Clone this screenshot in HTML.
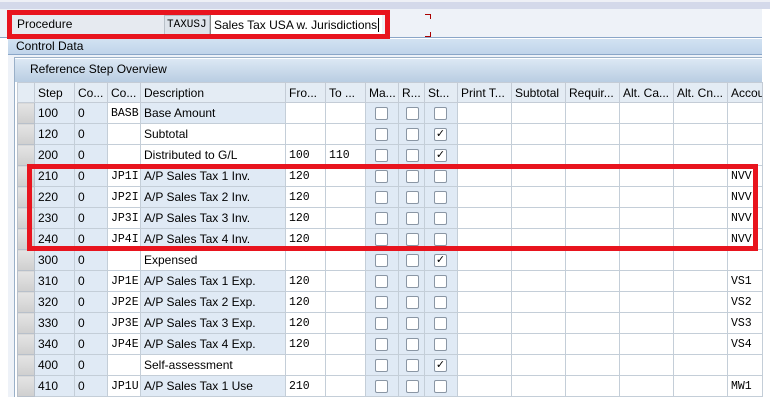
<!DOCTYPE html>
<html><head><meta charset="utf-8"><style>
*{margin:0;padding:0;box-sizing:border-box}
body{width:770px;height:403px;overflow:hidden;background:#fff;font-family:"Liberation Sans",Tahoma,sans-serif;font-size:12px;color:#000;position:relative}
.abs{position:absolute}
table{border-collapse:collapse;table-layout:fixed;position:absolute;left:17px;top:82px;width:745px}
td{height:21px;border:1px solid #c4ced8;padding:0 0 0 3px;white-space:nowrap;overflow:hidden;background:#fff;font-size:12px}
tr.h td{background:#e4ecf4;border-color:#c4ccd6;height:20px}
td.sel{background:linear-gradient(#e4e4e4,#cfcfcf);border-color:#b8c0ca}
td.b{background:#e0eaf5}
.m{font-family:"Liberation Mono",monospace;font-size:11.5px}
.cb{display:inline-block;width:13px;height:13px;border:1px solid #8a96a4;border-radius:2px;background:#fff;margin-left:6px;vertical-align:middle;text-align:center;line-height:11px;font-size:11px}
</style></head><body>
<div class="abs" style="left:0;top:0;width:770px;height:9px;background:#d4d9ea;border-top:2px solid #eef0f6"></div>
<div class="abs" style="left:0;top:9px;width:762px;height:29px;background:#eef2f8;border-bottom:1px solid #8aa6c8"></div>
<div class="abs" style="left:12px;top:15px;width:152px;height:21px;background:#e6eaf0;border-bottom:1px solid #b0b8c0;padding:2px 5px;font-size:12px">Procedure</div>
<div class="abs m" style="left:164px;top:15px;width:46px;height:21px;background:#dde3ea;border:1px solid #b8c0c8;padding:3px 2px;font-size:11px">TAXUSJ</div>
<div class="abs" style="left:210px;top:15px;width:172px;height:21px;background:#fff;border-left:1px solid #888;padding:3px 3px">Sales Tax USA w. Jurisdictions<span style="border-left:1px solid #000;margin-left:1px"></span></div>
<div class="abs" style="left:7px;top:10px;width:383px;height:29px;border:5px solid #e8141e"></div>
<div class="abs" style="left:425px;top:14px;width:6px;height:5px;border-top:1px solid #a00;border-right:1px solid #a00"></div>
<div class="abs" style="left:425px;top:32px;width:6px;height:5px;border-bottom:1px solid #a00;border-right:1px solid #a00"></div>
<div class="abs" style="left:8px;top:39px;width:754px;height:16px;background:linear-gradient(#d2e2f2,#c0d4ea);border-bottom:1px solid #8aa6c8;padding:0 8px;line-height:15px">Control Data</div>
<div class="abs" style="left:8px;top:55px;width:754px;height:348px;background:#eef2f8"></div>
<div class="abs" style="left:14px;top:57px;width:748px;height:340px;border-left:1px solid #9ab0c8;border-top:1px solid #9ab0c8;background:#fff"></div>
<div class="abs" style="left:15px;top:59px;width:747px;height:23px;background:linear-gradient(#dce8f4,#b9cde2);padding:3px 15px">Reference Step Overview</div>
<table>
<colgroup><col style="width:17px"><col style="width:40px"><col style="width:33px"><col style="width:33px"><col style="width:145px"><col style="width:40px"><col style="width:40px"><col style="width:33px"><col style="width:26px"><col style="width:33px"><col style="width:54px"><col style="width:54px"><col style="width:54px"><col style="width:54px"><col style="width:54px"><col style="width:35px"></colgroup>
<tr class="h"><td class="sel"></td><td>Step</td><td>Co...</td><td>Co...</td><td>Description</td><td>Fro...</td><td>To ...</td><td>Ma...</td><td>R...</td><td>St...</td><td>Print T...</td><td>Subtotal</td><td>Requir...</td><td>Alt. Ca...</td><td>Alt. Cn...</td><td>Accou</td></tr>
<tr><td class="sel"></td><td class="b">100</td><td class="b">0</td><td class="m">BASB</td><td class="b">Base Amount</td><td></td><td></td><td class="b"><span class="cb"></span></td><td class="b"><span class="cb" style="margin-left:4px"></span></td><td class="b"><span class="cb"></span></td><td></td><td></td><td></td><td></td><td></td><td></td></tr>
<tr><td class="sel"></td><td class="b">120</td><td class="b">0</td><td></td><td>Subtotal</td><td></td><td></td><td class="b"><span class="cb"></span></td><td class="b"><span class="cb" style="margin-left:4px"></span></td><td class="b"><span class="cb">✓</span></td><td></td><td></td><td></td><td></td><td></td><td></td></tr>
<tr><td class="sel"></td><td class="b">200</td><td class="b">0</td><td></td><td>Distributed to G/L</td><td class="m">100</td><td class="m">110</td><td class="b"><span class="cb"></span></td><td class="b"><span class="cb" style="margin-left:4px"></span></td><td class="b"><span class="cb">✓</span></td><td></td><td></td><td></td><td></td><td></td><td></td></tr>
<tr><td class="sel"></td><td class="b">210</td><td class="b">0</td><td class="m">JP1I</td><td class="b">A/P Sales Tax 1 Inv.</td><td class="m">120</td><td></td><td class="b"><span class="cb"></span></td><td class="b"><span class="cb" style="margin-left:4px"></span></td><td class="b"><span class="cb"></span></td><td></td><td></td><td></td><td></td><td></td><td class="m">NVV</td></tr>
<tr><td class="sel"></td><td class="b">220</td><td class="b">0</td><td class="m">JP2I</td><td class="b">A/P Sales Tax 2 Inv.</td><td class="m">120</td><td></td><td class="b"><span class="cb"></span></td><td class="b"><span class="cb" style="margin-left:4px"></span></td><td class="b"><span class="cb"></span></td><td></td><td></td><td></td><td></td><td></td><td class="m">NVV</td></tr>
<tr><td class="sel"></td><td class="b">230</td><td class="b">0</td><td class="m">JP3I</td><td class="b">A/P Sales Tax 3 Inv.</td><td class="m">120</td><td></td><td class="b"><span class="cb"></span></td><td class="b"><span class="cb" style="margin-left:4px"></span></td><td class="b"><span class="cb"></span></td><td></td><td></td><td></td><td></td><td></td><td class="m">NVV</td></tr>
<tr><td class="sel"></td><td class="b">240</td><td class="b">0</td><td class="m">JP4I</td><td class="b">A/P Sales Tax 4 Inv.</td><td class="m">120</td><td></td><td class="b"><span class="cb"></span></td><td class="b"><span class="cb" style="margin-left:4px"></span></td><td class="b"><span class="cb"></span></td><td></td><td></td><td></td><td></td><td></td><td class="m">NVV</td></tr>
<tr><td class="sel"></td><td class="b">300</td><td class="b">0</td><td></td><td>Expensed</td><td></td><td></td><td class="b"><span class="cb"></span></td><td class="b"><span class="cb" style="margin-left:4px"></span></td><td class="b"><span class="cb">✓</span></td><td></td><td></td><td></td><td></td><td></td><td></td></tr>
<tr><td class="sel"></td><td class="b">310</td><td class="b">0</td><td class="m">JP1E</td><td class="b">A/P Sales Tax 1 Exp.</td><td class="m">120</td><td></td><td class="b"><span class="cb"></span></td><td class="b"><span class="cb" style="margin-left:4px"></span></td><td class="b"><span class="cb"></span></td><td></td><td></td><td></td><td></td><td></td><td class="m">VS1</td></tr>
<tr><td class="sel"></td><td class="b">320</td><td class="b">0</td><td class="m">JP2E</td><td class="b">A/P Sales Tax 2 Exp.</td><td class="m">120</td><td></td><td class="b"><span class="cb"></span></td><td class="b"><span class="cb" style="margin-left:4px"></span></td><td class="b"><span class="cb"></span></td><td></td><td></td><td></td><td></td><td></td><td class="m">VS2</td></tr>
<tr><td class="sel"></td><td class="b">330</td><td class="b">0</td><td class="m">JP3E</td><td class="b">A/P Sales Tax 3 Exp.</td><td class="m">120</td><td></td><td class="b"><span class="cb"></span></td><td class="b"><span class="cb" style="margin-left:4px"></span></td><td class="b"><span class="cb"></span></td><td></td><td></td><td></td><td></td><td></td><td class="m">VS3</td></tr>
<tr><td class="sel"></td><td class="b">340</td><td class="b">0</td><td class="m">JP4E</td><td class="b">A/P Sales Tax 4 Exp.</td><td class="m">120</td><td></td><td class="b"><span class="cb"></span></td><td class="b"><span class="cb" style="margin-left:4px"></span></td><td class="b"><span class="cb"></span></td><td></td><td></td><td></td><td></td><td></td><td class="m">VS4</td></tr>
<tr><td class="sel"></td><td class="b">400</td><td class="b">0</td><td></td><td>Self-assessment</td><td></td><td></td><td class="b"><span class="cb"></span></td><td class="b"><span class="cb" style="margin-left:4px"></span></td><td class="b"><span class="cb">✓</span></td><td></td><td></td><td></td><td></td><td></td><td></td></tr>
<tr><td class="sel"></td><td class="b">410</td><td class="b">0</td><td class="m">JP1U</td><td class="b">A/P Sales Tax 1 Use</td><td class="m">210</td><td></td><td class="b"><span class="cb"></span></td><td class="b"><span class="cb" style="margin-left:4px"></span></td><td class="b"><span class="cb"></span></td><td></td><td></td><td></td><td></td><td></td><td class="m">MW1</td></tr>
</table>
<div class="abs" style="left:0;top:397px;width:770px;height:6px;background:#fff"></div>
<div class="abs" style="left:27px;top:164px;width:731px;height:87px;border:5px solid #e8141e"></div>
</body></html>
